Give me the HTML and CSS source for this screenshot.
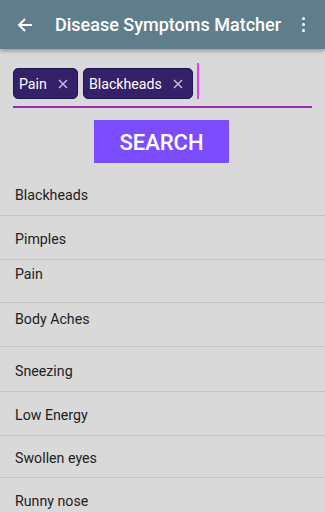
FILE: index.html
```html
<!DOCTYPE html>
<html>
<head>
<meta charset="utf-8">
<link rel="stylesheet" href="styles.css">
</head>
<body>
<header class="appbar">
  <svg class="back" width="16" height="16" viewBox="0 0 16 16"><path d="M15 8H2M8 2L2 8l6 6" fill="none" stroke="#fff" stroke-width="2"/></svg>
  <h1 class="title">Disease Symptoms Matcher</h1>
  <div class="menu"><span></span><span></span><span></span></div>
</header>
<main class="content">
  <div class="chipfield">
    <div class="chip">Pain<svg class="x" width="10" height="10" viewBox="0 0 10 10"><path d="M1 1l8 8M9 1L1 9" stroke="#c9c2e0" stroke-width="1.4"/></svg></div>
    <div class="chip">Blackheads<svg class="x" width="10" height="10" viewBox="0 0 10 10"><path d="M1 1l8 8M9 1L1 9" stroke="#c9c2e0" stroke-width="1.4"/></svg></div>
    <div class="cursor"></div>
  </div>
  <div class="btnrow"><button class="search">SEARCH</button></div>
  <ul class="list">
    <li class="item">Blackheads</li>
    <li class="item">Pimples</li>
    <li class="item top h43">Pain</li>
    <li class="item top top6">Body Aches</li>
    <li class="item h45">Sneezing</li>
    <li class="item">Low Energy</li>
    <li class="item h42">Swollen eyes</li>
    <li class="item">Runny nose</li>
  </ul>
</main>
</body>
</html>
```
FILE: styles.css
```css
html, body { margin: 0; padding: 0; }
body {
  width: 325px; height: 512px; overflow: hidden;
  background: #d9d9d9;
  font-family: Roboto, "Noto Sans", sans-serif;
}
.appbar {
  height: 49px; background: #607d8b;
  display: flex; align-items: center;
  box-shadow: 0 2px 4px rgba(0,0,0,0.3);
  position: relative; z-index: 1;
}
.back { margin-left: 17px; }
.title {
  margin: 0 0 0 22px; color: #fff; font-size: 18px; font-weight: 500;
  flex: 1;
}
.menu { display: flex; flex-direction: column; gap: 3px; margin-right: 20px; }
.menu span { width: 3px; height: 3px; border-radius: 50%; background: #fff; }
.chipfield {
  margin: 14px 13px 0 13px;
  height: 43px;
  border-bottom: 2px solid #9c27b0;
  display: flex; align-items: flex-start; gap: 5px;
}
.chip {
  margin-top: 5px;
  box-sizing: border-box; height: 31px;
  background: #35206a; border: 1px solid #1f1650; border-radius: 5px;
  color: #fff; font-size: 14.2px;
  display: flex; align-items: center; padding: 1px 9px 0 5px;
}
.chip .x { margin-left: 11px; }
.cursor { width: 2px; height: 36px; background: #e040fb; margin-left: -1px; }
.btnrow { display: flex; justify-content: center; padding-top: 12px; padding-right: 2px; }
.search {
  width: 135px; height: 43px; border: none; background: #7c4dff;
  color: #fff; font-family: Roboto, sans-serif; font-size: 22px; font-weight: 500;
  border-radius: 0; padding-top: 2px;
}
.list { list-style: none; margin: 9px 0 0 0; padding: 0; }
.item {
  height: 44px; box-sizing: border-box;
  border-bottom: 1px solid #c4c4c4;
  display: flex; align-items: center;
  padding: 3px 0 0 15px; font-size: 14.2px; color: #212121;
}
.item.top { align-items: flex-start; padding-top: 6px; }
.item.top6 { padding-top: 8px; }
.item.h43 { height: 43px; }
.item.h45 { height: 45px; }
.item.h42 { height: 42px; }
```
